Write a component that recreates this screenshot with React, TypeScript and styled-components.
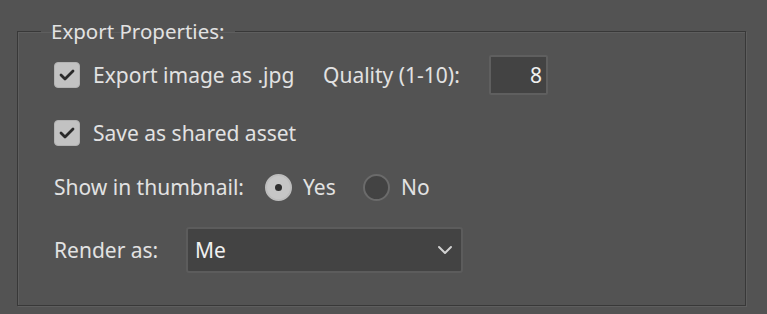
import React from "react";
import styled, { createGlobalStyle } from "styled-components";

const Global = createGlobalStyle`
  html, body { margin: 0; padding: 0; background: #535353; }
  body { font-family: "Noto Sans", "Open Sans", sans-serif; color: #e2e2e2; }
`;

const Page = styled.div`
  width: 767px;
  height: 314px;
  box-sizing: border-box;
  padding: 17px 20px 0 17px;
  background: #535353;
`;

const Group = styled.fieldset`
  margin: 0;
  width: 729px;
  height: 289px;
  box-sizing: border-box;
  border: 1px solid #383838;
  box-shadow: 1px 1px 0 #5e5e5e, inset 1px 1px 0 #5e5e5e;
  padding: 10px 0 0 36px;
  display: flex;
  flex-direction: column;
`;

const Legend = styled.legend`
  margin-left: -13px;
  padding: 0 10px;
  font-size: 20.5px;
  line-height: 28px;
  color: #e2e2e2;
`;

const Row = styled.div<{ $top?: number; $h?: number }>`
  display: flex;
  align-items: center;
  height: ${(p) => p.$h ?? 40}px;
  margin-top: ${(p) => p.$top ?? 0}px;
  font-size: 21px;
`;

const Label = styled.span<{ $w?: number }>`
  width: ${(p) => (p.$w ? `${p.$w}px` : "auto")};
  flex: none;
  white-space: nowrap;
`;

const Box = styled.span`
  width: 26px;
  height: 26px;
  box-sizing: border-box;
  border-radius: 4px;
  background: #c2c2c2;
  border: 1px solid #b2b2b2;
  display: inline-flex;
  align-items: center;
  justify-content: center;
  margin-right: 13px;
  flex: none;
`;

const Radio = styled.span<{ $on?: boolean }>`
  width: 27px;
  height: 27px;
  box-sizing: border-box;
  border-radius: 50%;
  background: ${(p) => (p.$on ? "#c6c6c6" : "#434343")};
  border: 2px solid ${(p) => (p.$on ? "#bdbdbd" : "#6b6b6b")};
  display: inline-flex;
  align-items: center;
  justify-content: center;
  margin-right: 11px;
  flex: none;
  &::after {
    content: "";
    display: ${(p) => (p.$on ? "block" : "none")};
    width: 7px;
    height: 7px;
    border-radius: 50%;
    background: #2e2e2e;
  }
`;

const NumberField = styled.div`
  width: 59px;
  height: 40px;
  box-sizing: border-box;
  background: #434343;
  border: 2px solid #5f5f5f;
  border-radius: 2px;
  display: flex;
  align-items: center;
  justify-content: flex-end;
  padding-right: 4px;
  color: #f0f0f0;
`;

const Select = styled.div`
  width: 277px;
  height: 46px;
  box-sizing: border-box;
  background: #434343;
  border: 2px solid #5c5c5c;
  border-radius: 3px;
  display: flex;
  align-items: center;
  justify-content: space-between;
  padding: 0 8px 0 7px;
  color: #f0f0f0;
`;

const Check = () => (
  <svg width="16" height="12" viewBox="0 0 16 12">
    <path d="M2 6 L6 10 L14 2" fill="none" stroke="#2a2a2a" strokeWidth="2.8" strokeLinecap="round" strokeLinejoin="round" />
  </svg>
);

const Chevron = () => (
  <svg width="16" height="10" viewBox="0 0 16 10">
    <path d="M2 2 L8 8 L14 2" fill="none" stroke="#d2d2d2" strokeWidth="2" strokeLinecap="round" strokeLinejoin="round" />
  </svg>
);

export default function App() {
  return (
    <>
      <Global />
      <Page>
        <Group>
          <Legend>Export Properties:</Legend>
          <Row>
            <Box><Check /></Box>
            <Label $w={230}>Export image as .jpg</Label>
            <Label $w={166}>Quality (1-10):</Label>
            <NumberField>8</NumberField>
          </Row>
          <Row $top={18}>
            <Box><Check /></Box>
            <Label>Save as shared asset</Label>
          </Row>
          <Row $top={14}>
            <Label $w={211}>Show in thumbnail:</Label>
            <Radio $on />
            <Label $w={60}>Yes</Label>
            <Radio />
            <Label>No</Label>
          </Row>
          <Row $top={20} $h={46}>
            <Label $w={132}>Render as:</Label>
            <Select>
              <span>Me</span>
              <Chevron />
            </Select>
          </Row>
        </Group>
      </Page>
    </>
  );
}
